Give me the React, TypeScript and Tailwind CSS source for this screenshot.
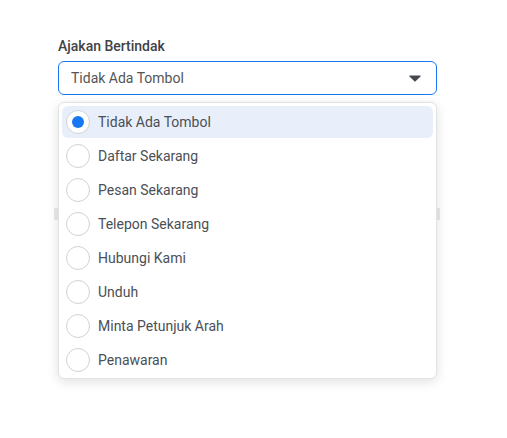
import React, { useState } from 'react';

const options = [
  'Tidak Ada Tombol',
  'Daftar Sekarang',
  'Pesan Sekarang',
  'Telepon Sekarang',
  'Hubungi Kami',
  'Unduh',
  'Minta Petunjuk Arah',
  'Penawaran',
];

const App: React.FC = () => {
  const [selected, setSelected] = useState<string>(options[0]);

  return (
    <div
      className="w-[507px] h-[438px] bg-white relative"
      style={{ fontFamily: 'Roboto, "Noto Sans", Arial, sans-serif' }}
    >
      <div className="pt-[36px] pl-[58px] w-[437px]">
        <div className="text-[14px] leading-[20px] font-medium text-[#3f4247] mb-[5px]">Ajakan Bertindak</div>
        <button className="w-[379px] h-[34px] border border-[#1877f2] rounded-[6px] flex items-center justify-between pl-[12px] pr-[15px] bg-white">
          <span className="text-[14px] text-[#555]">{selected}</span>
          <svg width="12" height="7" viewBox="0 0 12 7">
            <path d="M1 0.5h10c.6 0 .9.7.5 1.1L6.6 6.3a.9.9 0 0 1-1.2 0L.5 1.6C.1 1.2.4.5 1 .5z" fill="#444950" />
          </svg>
        </button>
        <div className="mt-[113px] -ml-[4px] w-[386px] h-[12px] bg-[#e9eaec]" />
      </div>

      <div className="absolute left-[58px] top-[102px] w-[379px] bg-white border border-[#e2e2e2] rounded-[6px] shadow-[0_3px_12px_rgba(0,0,0,0.12)] px-[3px] pt-[3px] pb-[2px] flex flex-col gap-[2px]">
        {options.map(opt => {
          const active = opt === selected;
          return (
            <div
              key={opt}
              onClick={() => setSelected(opt)}
              className={`h-[32px] flex items-center gap-[8px] px-[4px] rounded-[6px] ${active ? 'bg-[#e8effb]' : ''}`}
            >
              <span className="w-[24px] h-[24px] rounded-full border border-[#d0d2d6] bg-white flex items-center justify-center">
                {active && <span className="w-[12px] h-[12px] rounded-full bg-[#1877f2]" />}
              </span>
              <span className="text-[14px] text-[#4b4f56]">{opt}</span>
            </div>
          );
        })}
      </div>
    </div>
  );
};

export default App;
